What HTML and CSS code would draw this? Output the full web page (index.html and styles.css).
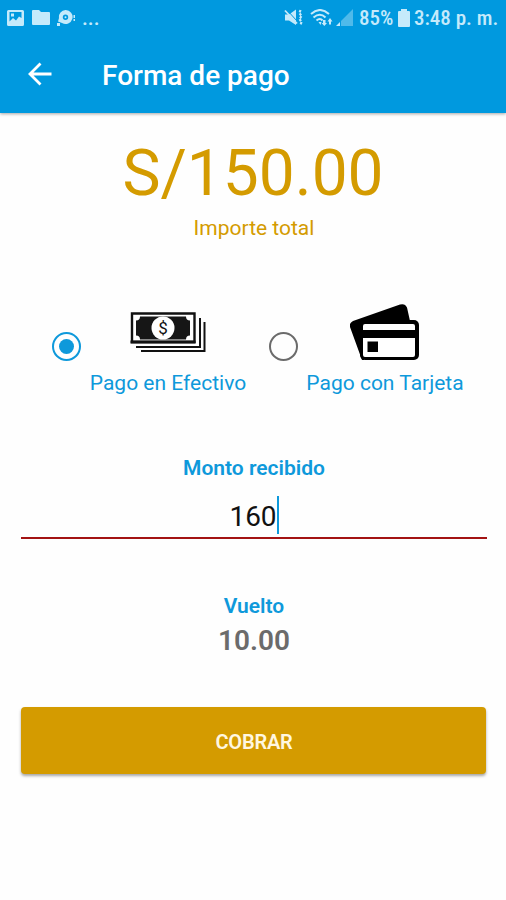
FILE: index.html
```html
<!DOCTYPE html>
<html lang="es">
<head>
  <meta charset="UTF-8" />
  <meta name="viewport" content="width=device-width, initial-scale=1" />
  <title>Forma de pago</title>
  <link rel="stylesheet" href="styles.css">
</head>
<body>
  <header class="top">
    <div class="status">
      <div class="status-left">
        <svg width="18" height="16" viewBox="0 0 18 16">
          <path fill="currentColor" fill-rule="evenodd" d="M1.500 0h14Q17 0 17 1.500v13Q17 16 15.500 16h-14Q0 16 0 14.500v-13Q0 0 1.500 0zM2.500 2v9.500l3.500-3.500 3 2.500 3-4 2.500 1.500V2zM4 3.500h3v3H4z"/>
        </svg>
        <svg width="18" height="15" viewBox="0 0 18 15">
          <path fill="currentColor" d="M1 0h6l2 2h8q1 0 1 1V14q0 1-1 1H1q-1 0-1-1V1q0-1 1-1z"/>
        </svg>
        <svg width="18" height="16" viewBox="0 0 18 16">
          <path fill="currentColor" fill-rule="evenodd" d="M8.500 0a7 7 0 1 1-3.500 13L1 11.500 2 8A7 7 0 0 1 8.500 0zM8.500 4.500a2.700 2.700 0 1 0 0 5.400 2.700 2.700 0 0 0 0-5.400z"/>
          <circle cx="8.500" cy="7.200" r="1" fill="currentColor"/>
          <path fill="currentColor" d="M0 13h3v3H0zM16.500 5H18v3h-1.500zM16.500 9H18v2h-1.500z"/>
        </svg>
        <span class="dots">...</span>
      </div>
      <div class="status-right">
        <svg class="mute" width="19" height="17" viewBox="0 0 19 17">
          <path fill="currentColor" d="M1 5.500h4l7-5v15.500l-7-4.500H1z"/>
          <path stroke="#0099df" stroke-width="1" d="M3 1l10 11"/>
          <path stroke="currentColor" stroke-width="1.800" d="M1 1.500l12 13"/>
          <path fill="none" stroke="currentColor" stroke-width="2.200" stroke-dasharray="2.500 1" d="M16.500 1l-1 3 2 3-2 3 2 3-1 3"/>
        </svg>
        <svg class="wifi" width="23" height="17" viewBox="0 0 23 17">
          <path fill="none" stroke="currentColor" stroke-width="2" d="M1 5q9-8 18 0M3.500 8.500q6.500-5.500 12 0M6.500 11.500q3.500-3 6 0"/>
          <path fill="currentColor" d="M8.500 13h3l-1 3zM13 11h2.500v3h1.500l-2.700 3-2.700-3h1.400zM17.500 12.500l2.500-3.500 2.500 3.500H21v3h-2v-3z"/>
        </svg>
        <svg class="signal" width="17" height="17" viewBox="0 0 17 17">
          <path fill="currentColor" opacity=".4" d="M17 0v17H5V12z"/>
          <path fill="currentColor" d="M4 13v4H0z"/>
        </svg>
        <span class="percent">85%</span>
        <svg class="battery" width="12" height="18" viewBox="0 0 12 18">
          <path fill="currentColor" d="M3 0h6v2h2q1 0 1 1v14q0 1-1 1H1q-1 0-1-1V3q0-1 1-1h2z"/>
        </svg>
        <span class="clock">3:48 p. m.</span>
      </div>
    </div>
    <div class="toolbar">
      <svg class="back" width="24" height="24" viewBox="0 0 24 24">
        <path fill="none" stroke="#fff" stroke-width="2.800" d="M23.500 12H2M12.500 1.500L2 12l10.500 10.500"/>
      </svg>
      <h1>Forma de pago</h1>
    </div>
  </header>

  <main>
    <div class="amount">S/150.00</div>
    <div class="amount-label">Importe total</div>

    <div class="methods">
      <div class="method">
        <span class="radio checked"></span>
        <div class="method-info">
          <svg width="76" height="60" viewBox="0 0 76 60">
            <path fill="none" stroke="#111" stroke-width="2" d="M6 45h64V16M11 49h63.500V20"/>
            <path fill="#fff" stroke="#111" stroke-width="2.400" d="M2 11.500h62.500V40H2z"/>
            <path stroke="#111" stroke-width="3" d="M.5 40h65"/>
            <path fill="#161616" d="M10 14.500h46q0 4 4 4v15q-4 0-4 4H10q0-4-4-4v-15q4 0 4-4z"/>
            <circle cx="33" cy="26" r="11.500" fill="#fff"/>
            <text class="dollar" x="33" y="32" text-anchor="middle">$</text>
          </svg>
          <span>Pago en Efectivo</span>
        </div>
      </div>
      <div class="method">
        <span class="radio"></span>
        <div class="method-info">
          <svg width="70" height="60" viewBox="0 0 70 60">
            <path d="M3 19L50 2.500q5-1.500 7 3L60 19H25L14 58h-2L0 25q-1-4 3-6z"/>
            <rect x="10" y="18" width="59" height="40" rx="5"/>
            <path fill="#fff" d="M15 22h48q2 0 2 2v4H13v-4q0-2 2-2zM13 36h52v17q0 2-2 2H15q-2 0-2-2z"/>
            <path d="M17.500 39.500h10.500V50H17.500z"/>
          </svg>
          <span>Pago con Tarjeta</span>
        </div>
      </div>
    </div>

    <div class="field-label">Monto recibido</div>
    <div class="field"><span>160</span><i class="caret"></i></div>

    <div class="change-label">Vuelto</div>
    <div class="change">10.00</div>

    <button class="pay">COBRAR</button>
  </main>
</body>
</html>
```

FILE: styles.css
```css
* {
  box-sizing: border-box;
}
body {
  margin: 0;
  height: 900px;
  background-color: #fefefe;
  font-family: Roboto, 'Liberation Sans', sans-serif;
  overflow: hidden;
}
svg {
  display: block;
  flex: none;
}
.top {
  height: 113px;
  background-color: #0099df;
  box-shadow: 0 1px 3px rgba(0, 0, 0, 0.35);
}
.status {
  height: 35px;
  padding: 0 8px 0 7px;
  display: flex;
  justify-content: space-between;
  align-items: center;
  color: #c5eafb;
}
.status-left, .status-right {
  display: flex;
  align-items: center;
}
.status-left {
  gap: 7px;
}
.dots {
  font-size: 21px;
  font-weight: 500;
  line-height: 36px;
}
.status-right {
  font-size: 21px;
  font-weight: 500;
  font-stretch: 75%;
}
.wifi {
  margin-left: 7px;
}
.signal {
  margin-left: 3px;
}
.percent {
  width: 34px;
  margin-left: 6px;
}
.battery {
  margin-left: 5px;
}
.clock {
  width: 84px;
  margin-left: 4px;
}
.percent, .clock {
  line-height: 36px;
  white-space: nowrap;
}
.toolbar {
  height: 78px;
  padding-left: 28px;
  display: flex;
  align-items: center;
}
h1 {
  margin: 4px 0 0 50px;
  font-size: 28px;
  font-weight: 550;
  line-height: 36px;
  color: #fff;
}
main {
  padding: 23px 19px 0 21px;
  text-align: center;
}
.amount {
  margin-left: -2px;
  font-size: 64px;
  line-height: 75px;
  color: #d49b00;
}
.amount-label {
  margin-top: 5px;
  font-size: 21px;
  line-height: 25px;
  color: #d49b00;
}
.methods {
  margin: 61px 0 0 31px;
  display: flex;
  gap: 22px;
}
.method {
  display: flex;
  align-items: flex-start;
}
.radio {
  width: 29px;
  height: 29px;
  margin-top: 30px;
  border: 2.500px solid #6b6b6b;
  border-radius: 50%;
  display: flex;
  align-items: center;
  justify-content: center;
}
.radio.checked {
  border-color: #0e99db;
}
.radio.checked::after {
  content: '';
  width: 15px;
  height: 15px;
  border-radius: 50%;
  background-color: #0e99db;
}
.method-info {
  width: 158px;
  margin-left: 8px;
  display: flex;
  flex-direction: column;
  align-items: center;
  font-size: 21px;
  line-height: 25px;
  white-space: nowrap;
  color: #0e99db;
}
.method-info span {
  margin-top: 9px;
}
.dollar {
  font-size: 17px;
  fill: #111;
}
.field-label, .change-label {
  font-size: 21px;
  font-weight: 600;
  line-height: 25px;
  color: #0e99db;
}
.field-label {
  margin-top: 60px;
}
.field {
  height: 58px;
  padding-top: 15px;
  border-bottom: 2px solid #a31313;
  display: flex;
  justify-content: center;
  font-size: 28px;
  line-height: 42px;
  color: #111;
}
.caret {
  width: 2px;
  height: 38px;
  background-color: #0e99db;
}
.change-label {
  margin-top: 55px;
}
.change {
  margin-top: 5px;
  font-size: 28px;
  font-weight: 600;
  line-height: 34px;
  color: #6b6b6b;
}
.pay {
  display: block;
  width: 465px;
  height: 67px;
  margin: 49px 0 0;
  padding: 2px 0 0 1px;
  border: none;
  border-radius: 4px;
  background-color: #d49b00;
  box-shadow: 0 2px 3px rgba(0, 0, 0, 0.35);
  font-family: inherit;
  font-size: 20px;
  font-weight: 600;
  letter-spacing: -0.2px;
  color: #fff7e0;
}
```
